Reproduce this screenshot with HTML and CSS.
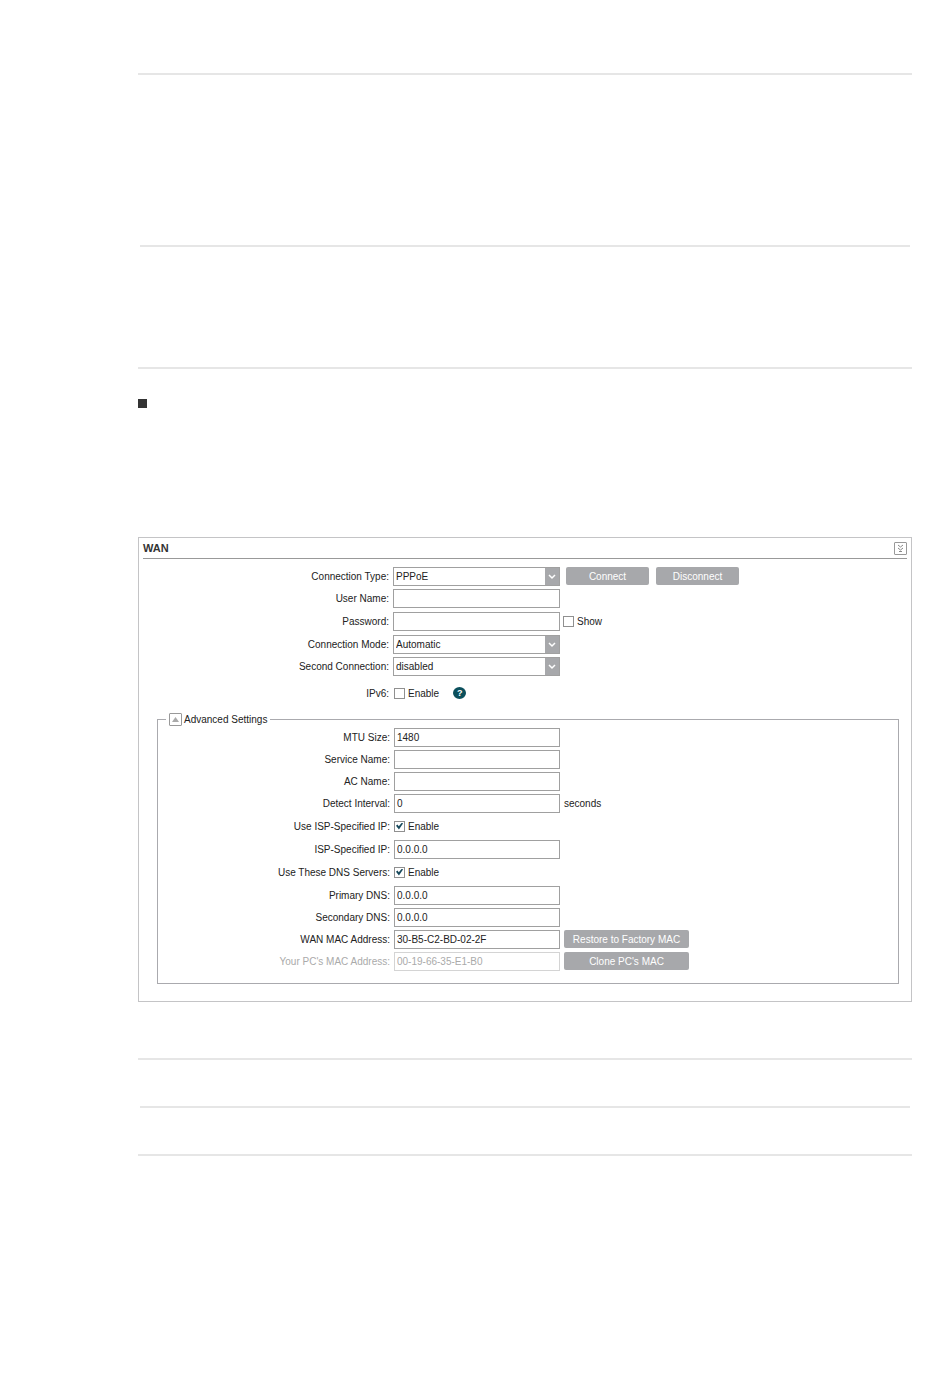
FILE: index.html
```html
<!DOCTYPE html>
<html lang="en">
<head>
    <meta charset="UTF-8">
    <meta name="viewport" content="width=device-width, initial-scale=1.0">
    <title>WAN</title>
    <link rel="stylesheet" href="styles.css">
</head>
<body>
    <main class="page">
        <div class="lines lines-top">
            <hr>
            <hr class="inner">
            <hr>
        </div>

        <ul class="bullets">
            <li></li>
        </ul>

        <form class="panel">
            <div class="panel-head">
                <h1>WAN</h1>
                <button type="button" class="icon-btn" aria-label="Collapse">
                    <svg viewBox="0 0 11 11"><path d="M3 2l2.500 2L8 2M3 5l2.500 2L8 5M4 8.500h3"/></svg>
                </button>
            </div>

            <div class="rows">
                <div class="row">
                    <label for="type">Connection Type:</label>
                    <span class="select">
                        <select id="type"><option>PPPoE</option></select>
                        <svg viewBox="0 0 14 17"><path d="M4 7l3 3 3-3"/></svg>
                    </span>
                    <div class="buttons">
                        <button type="button" class="btn">Connect</button>
                        <button type="button" class="btn">Disconnect</button>
                    </div>
                </div>
                <div class="row">
                    <label for="user">User Name:</label>
                    <input type="text" id="user">
                </div>
                <div class="row check">
                    <label for="password">Password:</label>
                    <input type="password" id="password">
                    <input type="checkbox" id="show" class="after">
                    <label for="show" class="option">Show</label>
                </div>
                <div class="row">
                    <label for="mode">Connection Mode:</label>
                    <span class="select">
                        <select id="mode"><option>Automatic</option></select>
                        <svg viewBox="0 0 14 17"><path d="M4 7l3 3 3-3"/></svg>
                    </span>
                </div>
                <div class="row">
                    <label for="second">Second Connection:</label>
                    <span class="select">
                        <select id="second"><option>disabled</option></select>
                        <svg viewBox="0 0 14 17"><path d="M4 7l3 3 3-3"/></svg>
                    </span>
                </div>
                <div class="row check ipv6">
                    <label for="ipv6">IPv6:</label>
                    <input type="checkbox" id="ipv6">
                    <label for="ipv6" class="option">Enable</label>
                    <button type="button" class="help">?</button>
                </div>
            </div>

            <fieldset class="rows advanced">
                <legend>
                    <button type="button" class="icon-btn" aria-label="Toggle">
                        <svg viewBox="0 0 11 11"><path class="solid" d="M2 8l3.500-5L9 8z"/></svg>
                    </button>
                    Advanced Settings
                </legend>
                <div class="row">
                    <label for="mtu">MTU Size:</label>
                    <input type="text" id="mtu" value="1480">
                </div>
                <div class="row">
                    <label for="service">Service Name:</label>
                    <input type="text" id="service">
                </div>
                <div class="row">
                    <label for="ac">AC Name:</label>
                    <input type="text" id="ac">
                </div>
                <div class="row">
                    <label for="detect">Detect Interval:</label>
                    <input type="text" id="detect" value="0">
                    <span class="unit">seconds</span>
                </div>
                <div class="row check">
                    <label for="useip">Use ISP-Specified IP:</label>
                    <input type="checkbox" id="useip" checked>
                    <label for="useip" class="option">Enable</label>
                </div>
                <div class="row">
                    <label for="ip">ISP-Specified IP:</label>
                    <input type="text" id="ip" value="0.0.0.0">
                </div>
                <div class="row check">
                    <label for="usedns">Use These DNS Servers:</label>
                    <input type="checkbox" id="usedns" checked>
                    <label for="usedns" class="option">Enable</label>
                </div>
                <div class="row">
                    <label for="dns1">Primary DNS:</label>
                    <input type="text" id="dns1" value="0.0.0.0">
                </div>
                <div class="row">
                    <label for="dns2">Secondary DNS:</label>
                    <input type="text" id="dns2" value="0.0.0.0">
                </div>
                <div class="row">
                    <label for="mac">WAN MAC Address:</label>
                    <input type="text" id="mac" value="30-B5-C2-BD-02-2F">
                    <button type="button" class="btn wide">Restore to Factory MAC</button>
                </div>
                <div class="row disabled">
                    <label for="pcmac">Your PC's MAC Address:</label>
                    <input type="text" id="pcmac" value="00-19-66-35-E1-B0" disabled>
                    <button type="button" class="btn wide">Clone PC's MAC</button>
                </div>
            </fieldset>
        </form>

        <div class="lines lines-bottom">
            <hr>
            <hr class="inner">
            <hr>
        </div>
    </main>
</body>
</html>
```
FILE: styles.css
```css
* {
    box-sizing: border-box;
}
body {
    margin: 0;
    background: #fff;
    color: #222;
    font-family: "Liberation Sans", Arial, sans-serif;
    font-size: 10px;
}
.page {
    padding: 73px 38px 40px 138px;
}
hr {
    height: 2px;
    margin: 0;
    border: none;
    background: #e6e6e6;
}
hr.inner {
    margin: 0 2px;
}
.lines {
    display: flex;
    flex-direction: column;
}
.lines-top hr:nth-child(2) {
    margin-top: 170px;
    margin-bottom: 120px;
}
.lines-bottom {
    gap: 46px;
    margin-top: 56px;
}
.bullets {
    list-style: none;
    margin: 30px 0 0;
    padding: 0;
}
.bullets li {
    height: 9px;
}
.bullets li::before {
    content: "";
    display: block;
    width: 9px;
    height: 9px;
    background: #333;
}
.panel {
    margin-top: 129px;
    padding: 0 4px 17px;
    border: 1px solid #c4c4c6;
}
.panel-head {
    display: flex;
    align-items: center;
    justify-content: space-between;
    height: 21px;
    border-bottom: 1px solid #999;
}
.panel-head h1 {
    margin: 0;
    font-size: 11px;
    color: #333;
}
.icon-btn {
    display: flex;
    width: 13px;
    height: 13px;
    padding: 0;
    border: 1px solid #999;
    border-radius: 1px;
    background: #fff;
}
.icon-btn svg {
    width: 100%;
    height: 100%;
    fill: none;
    stroke: #888;
}
.icon-btn .solid {
    fill: #aaa;
    stroke: none;
}
.rows {
    --label: 246px;
    --field: 167px;
    padding: 6px 0 0;
}
.row {
    display: flex;
    align-items: center;
    height: 22px;
}
.row.check {
    height: 24px;
}
.ipv6 {
    margin-top: 4px;
}
.row > label:first-child {
    width: var(--label);
    margin-right: 4px;
    text-align: right;
}
input, select, button {
    font: inherit;
    color: inherit;
}
input[type="text"],
input[type="password"],
.select {
    width: var(--field);
    height: 19px;
    border: 1px solid #a0a0a0;
    border-radius: 0;
    background: #fff;
}
input[type="text"],
input[type="password"] {
    padding: 0 2px;
}
.select {
    position: relative;
}
.select select {
    display: block;
    width: 100%;
    height: 100%;
    padding: 0 18px 0 2px;
    border: none;
    background: none;
    appearance: none;
}
.select svg {
    position: absolute;
    top: 0;
    right: 0;
    width: 14px;
    height: 17px;
    background: #a7a8ab;
    fill: none;
    stroke: #fff;
    stroke-width: 1.5;
    pointer-events: none;
}
input[type="checkbox"] {
    display: grid;
    place-items: center;
    width: 11px;
    height: 11px;
    margin: 0 3px 0 1px;
    border: 1px solid #909090;
    background: #fff;
    appearance: none;
}
input[type="checkbox"].after {
    margin-left: 3px;
}
input[type="checkbox"]:checked::before {
    content: "";
    width: 7px;
    height: 7px;
    background: #17495c;
    clip-path: polygon(0 45%, 20% 30%, 40% 55%, 85% 0, 100% 15%, 42% 100%);
}
.buttons {
    display: flex;
    gap: 7px;
    margin-left: 6px;
}
.btn {
    width: 83px;
    height: 18px;
    padding: 0;
    border: none;
    border-radius: 2px;
    background: #a7a8ab;
    color: #fff;
}
.btn.wide {
    width: 125px;
    margin-left: 4px;
}
.help {
    width: 13px;
    height: 12px;
    margin-left: 14px;
    padding: 0;
    border: none;
    border-radius: 50%;
    background: #0b4f5c;
    color: #fff;
    font-size: 9px;
    font-weight: bold;
    line-height: 12px;
}
.unit {
    margin-left: 4px;
}
.advanced {
    --label: 232px;
    --field: 166px;
    min-width: 0;
    margin: 7px 8px 0 14px;
    padding: 0 0 11px;
    border: 1px solid #aaaaae;
}
.advanced input[type="checkbox"] {
    margin-left: 0;
}
.advanced legend {
    display: flex;
    align-items: center;
    gap: 2px;
    height: 14px;
    margin-left: 8px;
    padding: 0 3px;
}
.disabled label,
.disabled input {
    color: #aaa;
}
.disabled input[type="text"] {
    border-color: #d4d4d4;
}
```
